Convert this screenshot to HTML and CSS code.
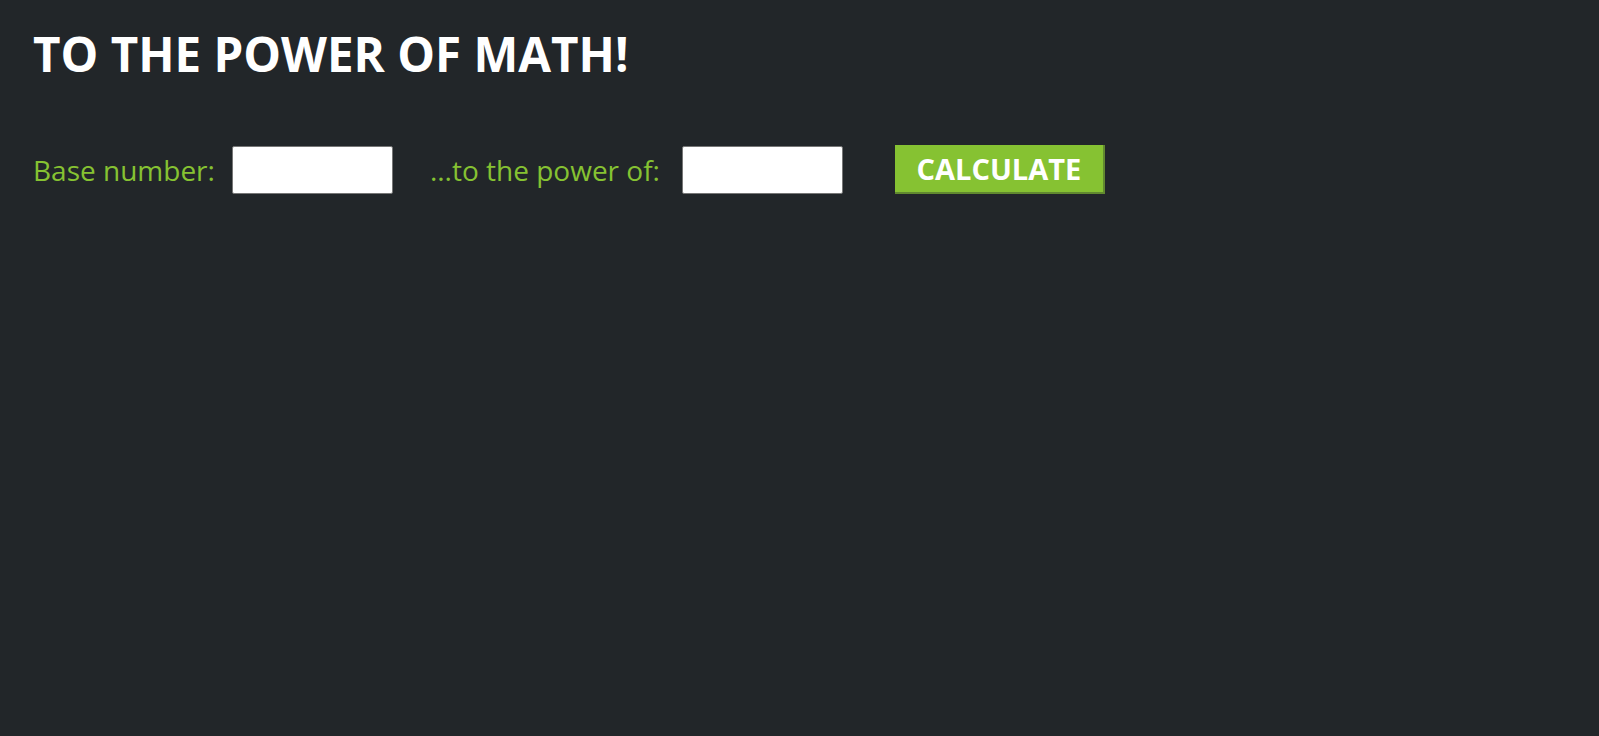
FILE: index.html
```html
<!DOCTYPE html>
<html>
<head>
<meta charset="utf-8">
<title>To the power of math</title>
<link rel="stylesheet" href="styles.css">
</head>
<body>
<main class="page">
  <h1 class="title">TO THE POWER OF MATH!</h1>
  <form class="calc-row">
    <label class="label label-base" for="base">Base number:</label>
    <input class="num-input input-base" id="base" type="text">
    <label class="label label-power" for="power">...to the power of:</label>
    <input class="num-input input-power" id="power" type="text">
    <button class="calc-btn" type="button">CALCULATE</button>
  </form>
</main>
</body>
</html>
```
FILE: styles.css
```css
html, body {
  margin: 0;
  padding: 0;
  background: #222629;
  height: 100%;
}
body {
  font-family: "Open Sans", "Noto Sans", sans-serif;
}
.page {
  padding: 22px 33px;
}
.title {
  margin: 0;
  color: #ffffff;
  font-size: 47.5px;
  font-weight: 700;
  line-height: 64px;
}
.calc-row {
  display: flex;
  align-items: center;
  margin-top: 59px;
}
.label {
  color: #86c232;
  font-size: 28px;
}
.num-input {
  box-sizing: border-box;
  width: 161px;
  height: 48px;
  border: 1px solid #767676;
  border-radius: 2px;
  background: #ffffff;
  padding: 0 8px;
  font-size: 20px;
  font-family: inherit;
}
.input-base {
  margin-left: 17px;
  margin-right: 37px;
}
.input-power {
  margin-left: 22px;
  margin-right: 52px;
}
.calc-btn {
  box-sizing: border-box;
  width: 210px;
  height: 49px;
  background: #86c232;
  color: #ffffff;
  border: none;
  border-right: 2px solid #61892f;
  border-bottom: 2px solid #61892f;
  font-family: inherit;
  font-size: 29px;
  font-weight: 700;
  padding: 0;
}
```
